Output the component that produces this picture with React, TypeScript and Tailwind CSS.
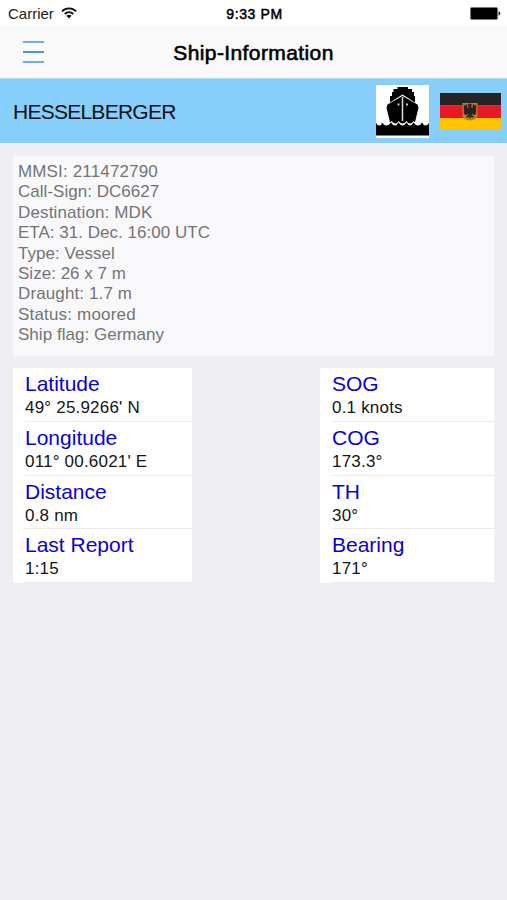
const details = [
  { text: 'MMSI: 211472790', style: 'tracking-[0.15px]' },
  { text: 'Call-Sign: DC6627', style: 'tracking-[0.03px]' },
  { text: 'Destination: MDK', style: 'tracking-[0.14px]' },
  { text: 'ETA: 31. Dec. 16:00 UTC', style: 'tracking-[0.02px]' },
  { text: 'Type: Vessel', style: 'tracking-[0.03px]' },
  { text: 'Size: 26 x 7 m', style: 'tracking-[0.02px]' },
  { text: 'Draught: 1.7 m', style: 'tracking-[0.12px]' },
  { text: 'Status: moored', style: 'tracking-[0.18px]' },
  { text: 'Ship flag: Germany', style: 'tracking-[0.03px]' },
];

const position = [
  ['Latitude', "49° 25.9266' N"],
  ['Longitude', "011° 00.6021' E"],
  ['Distance', '0.8 nm'],
  ['Last Report', '1:15'],
];

const motion = [
  ['SOG', '0.1 knots'],
  ['COG', '173.3°'],
  ['TH', '30°'],
  ['Bearing', '171°'],
];

function Wifi() {
  return (
    <svg className="-mt-[3px]" width="16" height="12" viewBox="0 0 16 12" fill="none" stroke="#111" strokeWidth="1.9">
      <path d="M1 4.3C4.9.4 11.1.4 15 4.3" />
      <path d="M3.7 7C6.2 4.6 9.8 4.6 12.3 7" />
      <path d="M8 11.4 5.4 8.7c1.5-1.3 3.7-1.3 5.2 0z" fill="#111" stroke="none" />
    </svg>
  );
}

function Battery() {
  return (
    <svg className="-mt-[2px]" width="31" height="13" viewBox="0 0 31 13">
      <rect x="0.5" y="0.5" width="27" height="12" rx="1.2" fill="#000" stroke="#777" strokeWidth="0.8" />
      <path d="M28.5 4.3c2.4.5 2.4 3.9 0 4.4z" fill="#222" />
    </svg>
  );
}

function ShipIcon() {
  return (
    <svg width="53" height="53" viewBox="0 0 53 53">
      <rect width="53" height="53" fill="#fff" />
      <path d="M21.500 4V2H32v2h4v3h2v4h1v6.500L26.500 9.500 14 17.500V11h2V7h1.500V4z" fill="#000" />
      <path d="M26.500 11 41.500 19.500l1 3.500-3.500 14V42H14v-5l-3.500-14 1-3.500z" fill="#000" />
      <path d="M26.500 12v24" stroke="#ddd" strokeWidth="1.500" />
      <path d="M22.500 18.500v2M31 18.500v2" stroke="#ddd" strokeWidth="1.800" />
      <path
        d="M13 37.500q1.500 0 2.500-1.500 2 2.500 4 2.500t3-2.500q2 2.500 4 2.500t4-2.500q1.500 2.500 3.500 2.500t3.500-2.500q1 1.500 3 1.500V44H13z"
        fill="#fff"
      />
      <path
        d="M0 38q1.500 2.500 3.500 2.500T6 37.500q2 3 4.500 3t4.500-3q2 3 4 3t3.500-3q2 3 4 3t4-3q2 3 3.500 3t3.500-3q2 3 4.500 3t4-3q1.500 3 3.500 3t3.500-2.500V50.500H0z"
        fill="#000"
      />
    </svg>
  );
}

function GermanFlag() {
  return (
    <svg width="61" height="37" viewBox="0 0 61 37">
      <rect width="61" height="12.500" fill="#272325" />
      <rect y="12.500" width="61" height="12.500" fill="#e71927" />
      <rect y="25" width="61" height="12" fill="#ffc400" />
      <path d="M22.500 10h15v12q0 5-7.500 5.500-7.500-.5-7.500-5.500z" fill="#c47c28" />
      <path d="M28 11.500q1.500-1.500 3.500 0l-.5 3 1.500 1 1-4.500 1 2 1.500-1-.2 9-2.300 1-1-2-1 2 2.500 2-2 .2-1.500-1-.5 2.500-.5-2.500-1.500 1-2-.2 2.500-2-1-2-1 2-2.300-1-.2-9 1.500 1 1-2 1 4.500 1.500-1z" fill="#272325" stroke="#272325" strokeWidth=".5" />
    </svg>
  );
}

function Table({ rows }: { rows: string[][] }) {
  return (
    <dl className="flex h-[215px] flex-col bg-white pl-3">
      {rows.map(([label, value]) => (
        <div key={label} className="h-[53.8px] shrink-0 border-b border-[#ebebed] pt-1">
          <dt className="h-[26px] text-[21px] leading-[24px] text-[#0a00dc]">{label}</dt>
          <dd className="whitespace-nowrap text-[17px] leading-[20px] tracking-[0.2px] text-[#151515]">{value}</dd>
        </div>
      ))}
    </dl>
  );
}

export default function App() {
  return (
    <div className="flex min-h-[900px] w-[507px] flex-col bg-[#efeef3] font-['Liberation_Sans',Arial,sans-serif] text-black">
      <div className="grid h-[26px] grid-cols-3 items-center bg-white pl-2 pr-[6px] pt-[2px]">
        <div className="flex items-center gap-[7px] text-[15px] leading-none text-[#222]">
          <span className="-mt-px">Carrier</span>
          <Wifi />
        </div>
        <time className="text-center text-[14px] leading-none tracking-[0.6px] [-webkit-text-stroke:0.5px_#000]">9:33 PM</time>
        <div className="flex justify-end"><Battery /></div>
      </div>
      <header className="grid h-[53px] grid-cols-[1fr_auto_1fr] items-center border-b border-[#b5d9ef] bg-[#f9f9f9]">
        <button aria-label="Menu" className="ml-[23px] flex w-[21px] flex-col gap-2">
          <span className="h-[2px] bg-[#6eaaf0]" />
          <span className="h-[2px] bg-[#4d96dc]" />
          <span className="h-[2px] bg-[#6eaaf0]" />
        </button>
        <h1 className="pt-[2px] text-[21px] leading-6 tracking-[0.4px] [-webkit-text-stroke:0.6px_#000]">Ship-Information</h1>
      </header>
      <section className="flex h-16 items-center bg-[#87cefa] pl-[13px] pr-[6px]">
        <h2 className="mt-[2px] flex-1 text-[21px] leading-6 tracking-[-0.75px] text-[#071018]">HESSELBERGER</h2>
        <ShipIcon />
        <div className="ml-[11px]"><GermanFlag /></div>
      </section>
      <main className="flex flex-col gap-3 pl-[13px] pr-[13px] pt-[13px]">
        <section className="h-[200px] bg-[#f9f9fc] pl-[5px] pt-[6px] text-[17px] leading-[20.4px] text-[#747474]">
          {details.map(({ text, style }) => <p key={text} className={style}>{text}</p>)}
        </section>
        <div className="flex justify-between">
          <div className="w-[179px]"><Table rows={position} /></div>
          <div className="w-[174px]"><Table rows={motion} /></div>
        </div>
      </main>
    </div>
  );
}
